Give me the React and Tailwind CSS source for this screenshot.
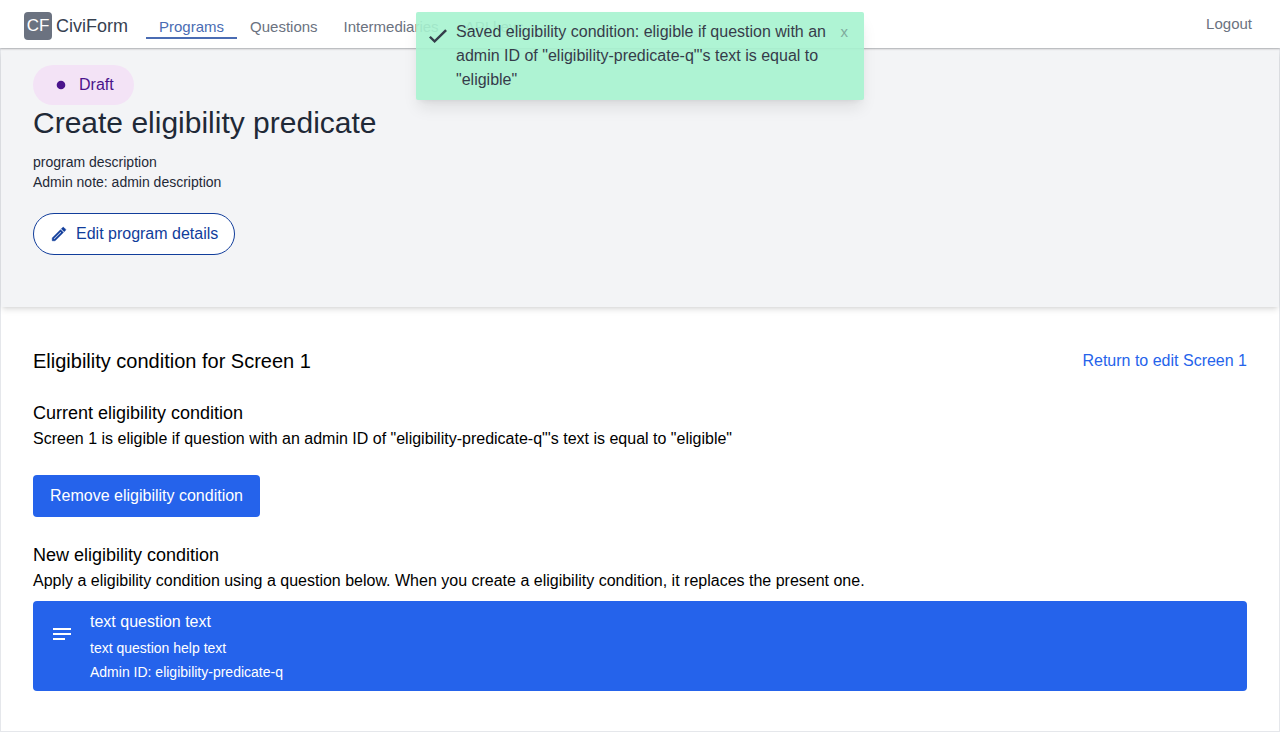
import React from "react";

const navItems = ["Questions", "Intermediaries", "API keys"];

function PencilIcon() {
  return (
    <svg
      className="size-[18px]"
      viewBox="0 0 24 24"
      fill="currentColor"
      stroke="currentColor"
      strokeWidth="0.7"
      aria-hidden="true"
    >
      <path d="M14.06 9.02l.92.92L5.92 19H5v-.92l9.06-9.06M17.66 3c-.25 0-.51.1-.7.29l-1.83 1.83 3.75 3.75 1.83-1.83c.39-.39.39-1.02 0-1.41l-2.34-2.34c-.2-.2-.45-.29-.71-.29zm-3.6 3.19L3 17.25V21h3.75L17.81 9.94l-3.75-3.75z" />
    </svg>
  );
}

function NavBar() {
  return (
    <nav className="relative z-10 flex h-12 items-center bg-white pl-6 pr-7 shadow-[0_1px_2px_rgba(0,0,0,0.25)]">
      <a href="#home" className="flex items-center gap-1 pt-1">
        <span className="flex size-7 items-center justify-center rounded-sm bg-[#6b7280] text-[17px] text-white">
          CF
        </span>
        <span className="text-lg text-[#374151]">CiviForm</span>
      </a>
      <div className="ml-[18px] flex pt-2 text-[15px] leading-5 text-[#6b7280]">
        <a href="#programs" className="border-b-2 border-[#4a6cb3] px-[13px] text-[#4a6cb3]">
          Programs
        </a>
        {navItems.map((item) => (
          <a key={item} href="#nav" className="px-[13px]">
            {item}
          </a>
        ))}
      </div>
      <a href="#logout" className="ml-auto text-[15px] leading-6 text-[#6b7280]">
        Logout
      </a>
    </nav>
  );
}

function Toast() {
  return (
    <div
      role="status"
      className="absolute left-1/2 top-3 z-20 flex w-md -translate-x-1/2 items-start rounded-xs bg-[#a7f3d0] px-3 py-2 text-[#1f2937] opacity-90 shadow-lg"
    >
      <svg className="mt-1.5 mr-2 size-5 shrink-0" viewBox="0 0 20 20" fill="currentColor" aria-hidden="true">
        <path d="M6.6 17 1 11.6l1.7-1.7 3.9 3.8L17.2 3.2 19 4.9z" />
      </svg>
      <p className="flex-1 text-base leading-6">
        Saved eligibility condition: eligible if question with an admin ID of "eligibility-predicate-q"'s text is equal
        to "eligible"
      </p>
      <button type="button" aria-label="Dismiss" className="ml-2 px-1 text-[15px] leading-6 opacity-40">
        x
      </button>
    </div>
  );
}

function ProgramHeader() {
  return (
    <header className="bg-[#f3f4f6] px-8 pb-13 pt-4 text-[#1f2937] shadow-md">
      <div className="flex h-10 w-fit items-center gap-2 rounded-full bg-[#f3e3f6] pl-[18px] pr-5 text-base text-[#4a148c]">
        <svg className="size-5" viewBox="0 0 20 20" fill="currentColor" aria-hidden="true">
          <circle cx="10" cy="10" r="4.3" />
        </svg>
        Draft
      </div>
      <h1 className="text-3xl leading-9">Create eligibility predicate</h1>
      <div className="mt-[11px] text-sm leading-5">
        <p>program description</p>
        <p>Admin note: admin description</p>
      </div>
      <button
        type="button"
        className="mt-[21px] flex h-[42px] items-center gap-2 rounded-full border border-[#113d9b] bg-white px-4 text-base text-[#113d9b]"
      >
        <PencilIcon />
        Edit program details
      </button>
    </header>
  );
}

export default function App() {
  return (
    <div className="relative min-h-screen bg-white font-['Liberation_Sans',Arial,sans-serif] text-black">
      <NavBar />
      <Toast />
      <main className="border border-[#e5e7eb]">
        <ProgramHeader />
        <div className="px-8 pb-10 pt-10">
          <div className="flex items-center justify-between">
            <h2 className="text-xl leading-7">Eligibility condition for Screen 1</h2>
            <a href="#screen" className="text-base leading-6 text-[#2563eb]">
              Return to edit Screen 1
            </a>
          </div>
          <section className="mt-6">
            <h3 className="text-lg leading-7">Current eligibility condition</h3>
            <p className="text-base leading-6">
              Screen 1 is eligible if question with an admin ID of "eligibility-predicate-q"'s text is equal to
              "eligible"
            </p>
            <button type="button" className="mt-6 h-[42px] rounded-sm bg-[#2563eb] px-[17px] text-base text-white">
              Remove eligibility condition
            </button>
          </section>
          <section className="mt-6">
            <h3 className="text-lg leading-7">New eligibility condition</h3>
            <p className="text-base leading-6">
              Apply a eligibility condition using a question below. When you create a eligibility condition, it
              replaces the present one.
            </p>
            <button
              type="button"
              className="mt-2 flex w-full items-start gap-4 rounded-sm bg-[#2563eb] px-[17px] py-[9px] text-left text-white"
            >
              <svg className="mt-3 size-6 shrink-0" viewBox="0 0 24 24" fill="currentColor" aria-hidden="true">
                <path d="M3 6h18v2H3zM3 11h18v2H3zM3 16h12v2H3z" />
              </svg>
              <span className="flex flex-col gap-1">
                <span className="text-base leading-6">text question text</span>
                <span className="text-sm leading-5">text question help text</span>
                <span className="text-sm leading-5">Admin ID: eligibility-predicate-q</span>
              </span>
            </button>
          </section>
        </div>
      </main>
    </div>
  );
}
